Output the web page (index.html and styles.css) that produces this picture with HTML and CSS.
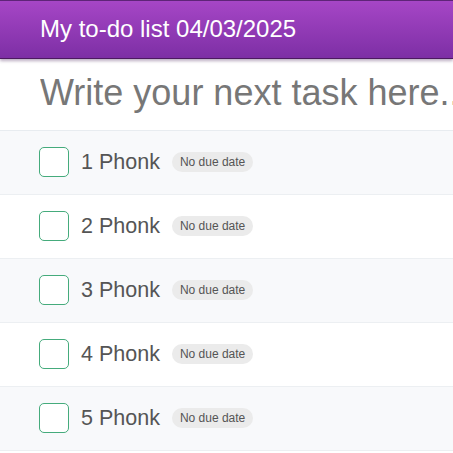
FILE: index.html
```html
<!DOCTYPE html>
<html>
<head>
<meta charset="utf-8">
<link rel="stylesheet" href="styles.css">
</head>
<body>
<header class="header"><h1 class="title">My to-do list 04/03/2025</h1></header>
<div class="new-task"><input class="new-input" type="text" placeholder="Write your next task here..."></div>
<ul class="list">
  <li class="item"><span class="check"></span><span class="name">1 Phonk</span><span class="badge">No due date</span></li>
  <li class="item"><span class="check"></span><span class="name">2 Phonk</span><span class="badge">No due date</span></li>
  <li class="item"><span class="check"></span><span class="name">3 Phonk</span><span class="badge">No due date</span></li>
  <li class="item"><span class="check"></span><span class="name">4 Phonk</span><span class="badge">No due date</span></li>
  <li class="item"><span class="check"></span><span class="name">5 Phonk</span><span class="badge">No due date</span></li>
</ul>
</body>
</html>
```
FILE: styles.css
```css
html, body {
  margin: 0;
  padding: 0;
  background: #fff;
  font-family: "Liberation Sans", Arial, sans-serif;
  overflow: hidden;
}
.header {
  height: 57px;
  border-top: 1px solid #5e2478;
  border-bottom: 1px solid #4c1a60;
  background: linear-gradient(to bottom, #a646c6, #7d2fa5);
  box-shadow: 0 2px 3px rgba(60, 20, 80, 0.35);
  display: flex;
  align-items: center;
  padding-left: 40px;
  position: relative;
}
.title {
  margin: 0;
  color: #fff;
  font-weight: normal;
  font-size: 24px;
  line-height: 1;
  padding-bottom: 1px;
}
.new-task {
  height: 71px;
  border-bottom: 1px solid #e8ecf0;
  display: flex;
  align-items: center;
  overflow: hidden;
}
.new-input {
  flex: none;
  border: none;
  outline: none;
  background: transparent;
  width: 520px;
  padding: 0 0 4px 40px;
  margin: 0;
  font-family: "Liberation Sans", Arial, sans-serif;
  font-size: 36px;
  color: #555;
}
.new-input::placeholder {
  color: #777;
  opacity: 1;
}
.list {
  list-style: none;
  margin: 0;
  padding: 0;
}
.item {
  height: 63px;
  border-bottom: 1px solid #eceff2;
  display: flex;
  align-items: center;
  padding-left: 39px;
  padding-bottom: 1px;
  box-sizing: border-box;
  height: 64px;
}
.item:nth-child(odd) {
  background: #f8f9fb;
}
.check {
  width: 28px;
  height: 28px;
  border: 1px solid #45ab7c;
  border-radius: 5px;
  background: #fff;
  box-sizing: content-box;
  flex: none;
}
.name {
  margin-left: 12px;
  font-size: 21.5px;
  color: #555;
}
.badge {
  margin-left: 12px;
  background: #ebebeb;
  color: #555;
  font-size: 12px;
  border-radius: 10px;
  padding: 4px 8px 4px;
  line-height: 12px;
}
```
